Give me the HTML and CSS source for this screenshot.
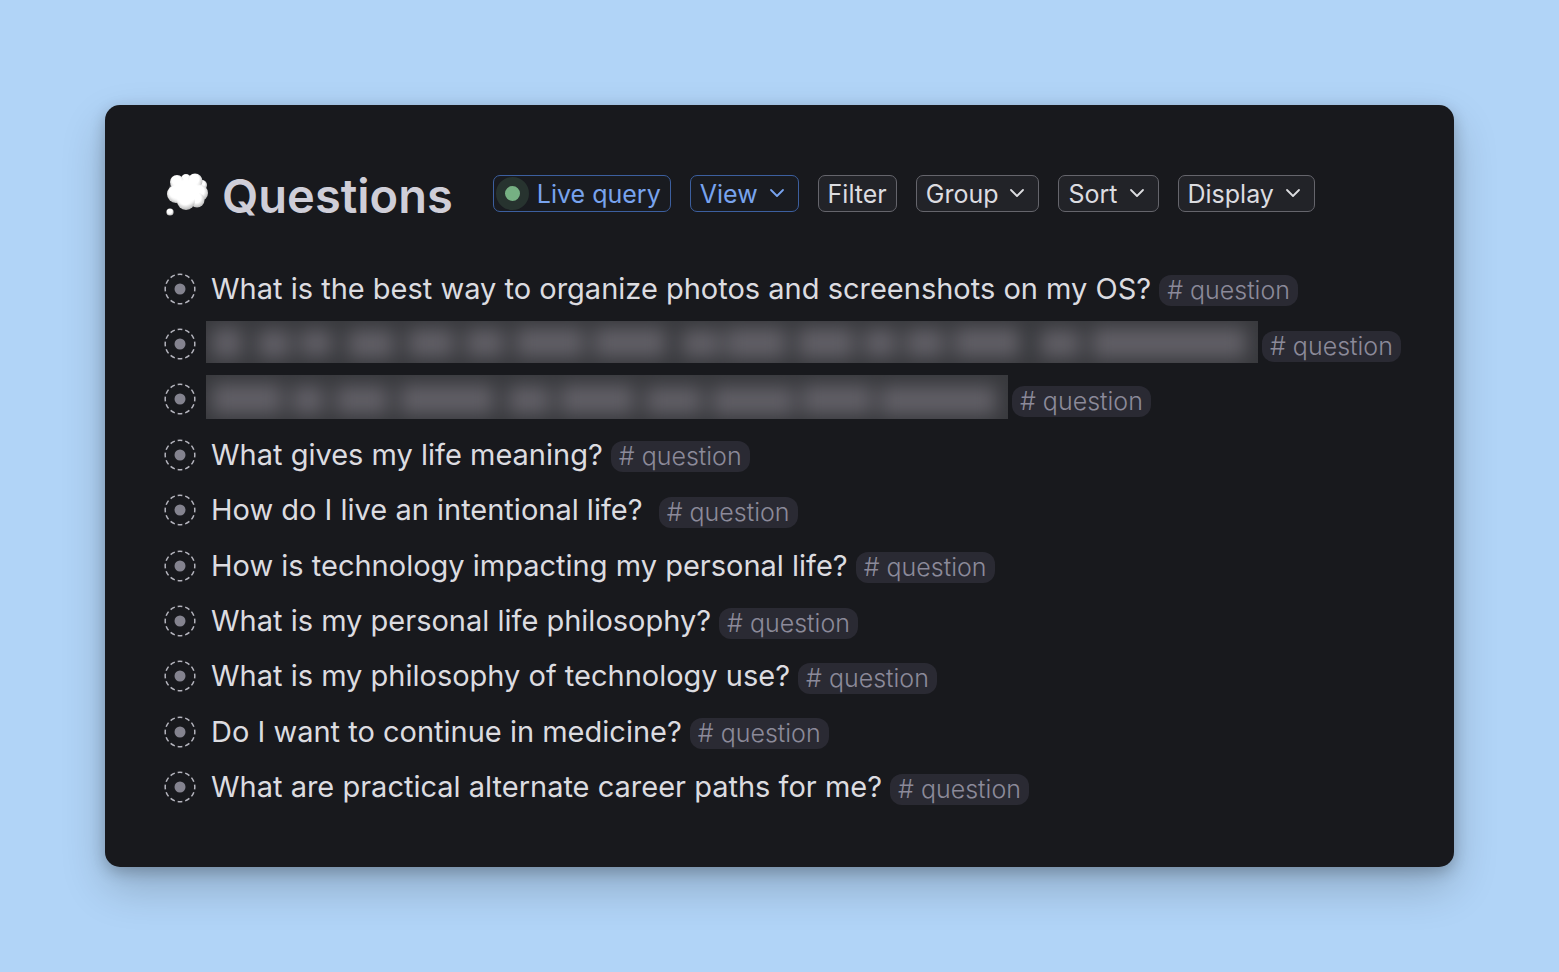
FILE: index.html
```html
<!DOCTYPE html>
<html lang="en">
<head>
  <meta charset="UTF-8">
  <meta name="viewport" content="width=device-width, initial-scale=1.0">
  <title>Questions</title>
  <link rel="stylesheet" href="styles.css">
</head>
<body>

<svg class="defs" aria-hidden="true">
  <symbol id="bullet" viewBox="0 0 32 32">
    <circle cx="16" cy="16" r="14.8" fill="none" stroke="#b4b4bd" stroke-width="1.5" stroke-dasharray="5 3" pathLength="96" stroke-dashoffset="2.5"/>
    <circle cx="16" cy="16" r="5.5" fill="#84838f"/>
  </symbol>
  <symbol id="chevron" viewBox="0 0 16 16">
    <path d="M2 4 L8 10 L14 4" fill="none" stroke="currentColor" stroke-width="1.8" stroke-linecap="round" stroke-linejoin="round"/>
  </symbol>
</svg>

<main class="card">
  <header class="header">
    <svg class="cloud" viewBox="0 0 44 44" aria-hidden="true">
      <defs>
        <radialGradient id="puff" cx="45%" cy="38%" r="62%">
          <stop offset="0.5" stop-color="#fff"/>
          <stop offset="1" stop-color="#b9b9b9"/>
        </radialGradient>
        <radialGradient id="middle">
          <stop offset="0.7" stop-color="#fff"/>
          <stop offset="1" stop-color="#fff" stop-opacity="0"/>
        </radialGradient>
      </defs>
      <g fill="url(#puff)">
        <circle cx="36" cy="12" r="5"/>
        <circle cx="20" cy="6" r="5"/>
        <circle cx="11" cy="9" r="7"/>
        <circle cx="29" cy="8" r="7.5"/>
        <circle cx="34" cy="20" r="8"/>
        <circle cx="10" cy="21" r="9"/>
        <circle cx="31" cy="27" r="7.5"/>
        <circle cx="20" cy="28" r="9"/>
      </g>
      <ellipse cx="20" cy="18" rx="18" ry="15" fill="url(#middle)"/>
      <circle cx="4" cy="39" r="3.6" fill="url(#puff)"/>
    </svg>
    <h1>Questions</h1>
    <div class="toolbar">
      <button type="button" class="btn blue live"><span class="dot"></span>Live query</button>
      <button type="button" class="btn blue menu">View <svg class="chevron"><use href="#chevron"/></svg></button>
      <button type="button" class="btn">Filter</button>
      <button type="button" class="btn menu">Group <svg class="chevron"><use href="#chevron"/></svg></button>
      <button type="button" class="btn menu">Sort <svg class="chevron"><use href="#chevron"/></svg></button>
      <button type="button" class="btn menu">Display <svg class="chevron"><use href="#chevron"/></svg></button>
    </div>
  </header>

  <ul class="list">
    <li><svg class="bullet"><use href="#bullet"/></svg><span>What is the best way to organize photos and screenshots on my OS?</span><a href="#question" class="tag"># question</a></li>
    <li>
      <svg class="bullet"><use href="#bullet"/></svg>
      <svg class="hidden-text long" viewBox="0 0 1052 42" preserveAspectRatio="none" role="img" aria-label="Hidden question">
        <g class="words">
          <rect x="6" y="7" width="30" height="30"/><rect x="52" y="9" width="32" height="28"/><rect x="94" y="9" width="32" height="26"/>
          <rect x="142" y="9" width="46" height="28"/><rect x="202" y="8" width="46" height="28"/><rect x="260" y="8" width="38" height="28"/>
          <rect x="310" y="7" width="68" height="29"/><rect x="388" y="7" width="72" height="29"/><rect x="476" y="9" width="38" height="27"/>
          <rect x="520" y="7" width="60" height="30"/><rect x="592" y="7" width="56" height="30"/><rect x="658" y="8" width="32" height="28"/>
          <rect x="700" y="8" width="38" height="28"/><rect x="748" y="7" width="66" height="29"/><rect x="834" y="9" width="40" height="27"/>
          <rect x="886" y="7" width="154" height="30"/>
        </g>
      </svg>
      <a href="#question" class="tag"># question</a>
    </li>
    <li>
      <svg class="bullet"><use href="#bullet"/></svg>
      <svg class="hidden-text short" viewBox="0 0 802 44" preserveAspectRatio="none" role="img" aria-label="Hidden question">
        <g class="words">
          <rect x="6" y="9" width="70" height="30"/><rect x="86" y="11" width="32" height="28"/><rect x="130" y="11" width="52" height="28"/>
          <rect x="194" y="10" width="94" height="29"/><rect x="302" y="11" width="42" height="28"/><rect x="354" y="10" width="74" height="29"/>
          <rect x="440" y="12" width="56" height="27"/><rect x="506" y="12" width="82" height="28"/><rect x="596" y="10" width="70" height="29"/>
          <rect x="674" y="11" width="116" height="29"/>
        </g>
      </svg>
      <a href="#question" class="tag"># question</a>
    </li>
    <li><svg class="bullet"><use href="#bullet"/></svg><span>What gives my life meaning?</span><a href="#question" class="tag"># question</a></li>
    <li><svg class="bullet"><use href="#bullet"/></svg><span>How do I live an intentional life?&nbsp;</span><a href="#question" class="tag"># question</a></li>
    <li><svg class="bullet"><use href="#bullet"/></svg><span>How is technology impacting my personal life?</span><a href="#question" class="tag"># question</a></li>
    <li><svg class="bullet"><use href="#bullet"/></svg><span>What is my personal life philosophy?</span><a href="#question" class="tag"># question</a></li>
    <li><svg class="bullet"><use href="#bullet"/></svg><span>What is my philosophy of technology use?</span><a href="#question" class="tag"># question</a></li>
    <li><svg class="bullet"><use href="#bullet"/></svg><span>Do I want to continue in medicine?</span><a href="#question" class="tag"># question</a></li>
    <li><svg class="bullet"><use href="#bullet"/></svg><span>What are practical alternate career paths for me?</span><a href="#question" class="tag"># question</a></li>
  </ul>
</main>

</body>
</html>
```

FILE: styles.css
```css
* {
  box-sizing: border-box;
}

body {
  margin: 0;
  padding: 105px;
  min-height: 100vh;
  display: flex;
  background-color: #b1d4f7;
  font-family: Inter, "Liberation Sans", sans-serif;
  font-optical-sizing: none;
}

.defs {
  position: absolute;
  width: 0;
  height: 0;
}

.card {
  flex: 1;
  display: flex;
  flex-direction: column;
  padding: 60px 50px 52px 59px;
  background-color: #18191d;
  border-radius: 15px;
  box-shadow: 0 20px 45px rgba(0, 0, 0, 0.2), 0 5px 15px rgba(0, 0, 0, 0.22);
}

/* Header */
.header {
  display: flex;
  align-items: center;
  height: 60px;
  margin-bottom: 36px;
}

.cloud {
  width: 44px;
  height: 44px;
  margin-left: 2px;
}

h1 {
  margin: 2px 0 0 12px;
  font-size: 47px;
  line-height: 60px;
  font-weight: 600;
  color: #cfced8;
}

.toolbar {
  display: flex;
  gap: 19px;
  margin: 0 0 4px 40px;
}

.btn {
  display: flex;
  align-items: center;
  gap: 11px;
  height: 37px;
  padding: 1px 9px 0;
  border: 1px solid #65656c;
  border-radius: 7px;
  background-color: #222328;
  color: #dcdce0;
  font: inherit;
  font-size: 25px;
  white-space: nowrap;
  cursor: pointer;
}

.btn.blue {
  border-color: #3c5f9f;
  background-color: #191b20;
  color: #78a3ee;
}

.btn.menu {
  padding-right: 13px;
}

.btn.live {
  padding-left: 2px;
  gap: 8px;
}

.dot {
  width: 33px;
  height: 33px;
  border: 9px solid #27332f;
  border-radius: 50%;
  background-color: #76b083;
}

.chevron {
  width: 16px;
  height: 16px;
}

/* Questions */
.list {
  flex: 1;
  display: grid;
  grid-auto-rows: 1fr;
  margin: 0;
  padding: 0;
  list-style: none;
}

.list li {
  display: flex;
  align-items: center;
  font-size: 29px;
  line-height: 36px;
  color: #dcdce0;
  white-space: nowrap;
}

.bullet {
  flex: none;
  width: 32px;
  height: 32px;
  margin-right: 15px;
}

.tag {
  padding: 0 8px;
  margin: 4px 0 0 8px;
  border-radius: 12px;
  background-color: #2a2a33;
  color: #8c8a9a;
  font-size: 25px;
  font-weight: 350;
  line-height: 31px;
  text-decoration: none;
}

.hidden-text {
  height: 42px;
  margin: 0 0 4px -5px;
  background-color: #38393d;
}

.hidden-text.long {
  width: 1052px;
}

.hidden-text.short {
  width: 802px;
  height: 44px;
}

.hidden-text + .tag {
  margin-left: 4px;
}

.words {
  fill: #615f66;
  filter: blur(9px);
}
```
